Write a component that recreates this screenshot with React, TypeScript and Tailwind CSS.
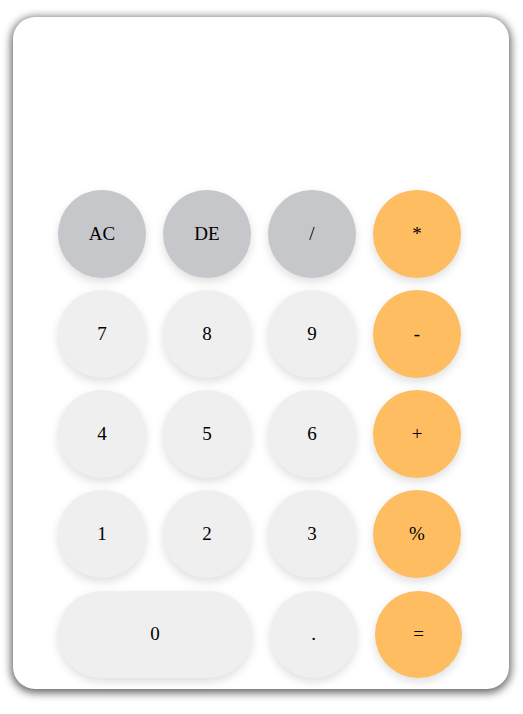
const ROWS: { label: string; kind: "op" | "num" | "act" }[][] = [
  [
    { label: "AC", kind: "act" },
    { label: "DE", kind: "act" },
    { label: "/", kind: "act" },
    { label: "*", kind: "op" },
  ],
  [
    { label: "7", kind: "num" },
    { label: "8", kind: "num" },
    { label: "9", kind: "num" },
    { label: "-", kind: "op" },
  ],
  [
    { label: "4", kind: "num" },
    { label: "5", kind: "num" },
    { label: "6", kind: "num" },
    { label: "+", kind: "op" },
  ],
  [
    { label: "1", kind: "num" },
    { label: "2", kind: "num" },
    { label: "3", kind: "num" },
    { label: "%", kind: "op" },
  ],
];

const colors = {
  act: "bg-[#c6c7cb]",
  num: "bg-[#efefef]",
  op: "bg-[#fdbd60]",
};

function Key({ label, className }: { label: string; className: string }) {
  return (
    <button
      className={
        "flex items-center justify-center rounded-full font-[Liberation_Serif,Times_New_Roman,serif] text-[19px] text-black shadow-[0_4px_10px_rgba(0,0,0,0.13)] " +
        className
      }
    >
      {label}
    </button>
  );
}

export default function App() {
  return (
    <div className="min-h-[714px] w-[523px] bg-white pl-[13px] pt-[17px] font-[Liberation_Serif,Times_New_Roman,serif]">
      <div className="flex h-[672px] w-[496px] flex-col rounded-[22px] bg-white shadow-[0_2px_8px_2px_rgba(0,0,0,0.6)]">
        {/* display */}
        <div className="h-[173px]"></div>

        {/* keys */}
        <div className="flex flex-col gap-[12px] pl-[45px]">
          {ROWS.map((row, i) => (
            <div key={i} className="flex gap-[17px]">
              {row.map((k) => (
                <Key key={k.label} label={k.label} className={"h-[88px] w-[88px] " + colors[k.kind]} />
              ))}
            </div>
          ))}
          <div className="mt-px flex gap-[18px]">
            <Key label="0" className={"h-[87px] w-[194px] " + colors.num} />
            <Key label="." className={"h-[87px] w-[87px] " + colors.num} />
            <Key label="=" className={"h-[87px] w-[87px] " + colors.op} />
          </div>
        </div>
      </div>
    </div>
  );
}
